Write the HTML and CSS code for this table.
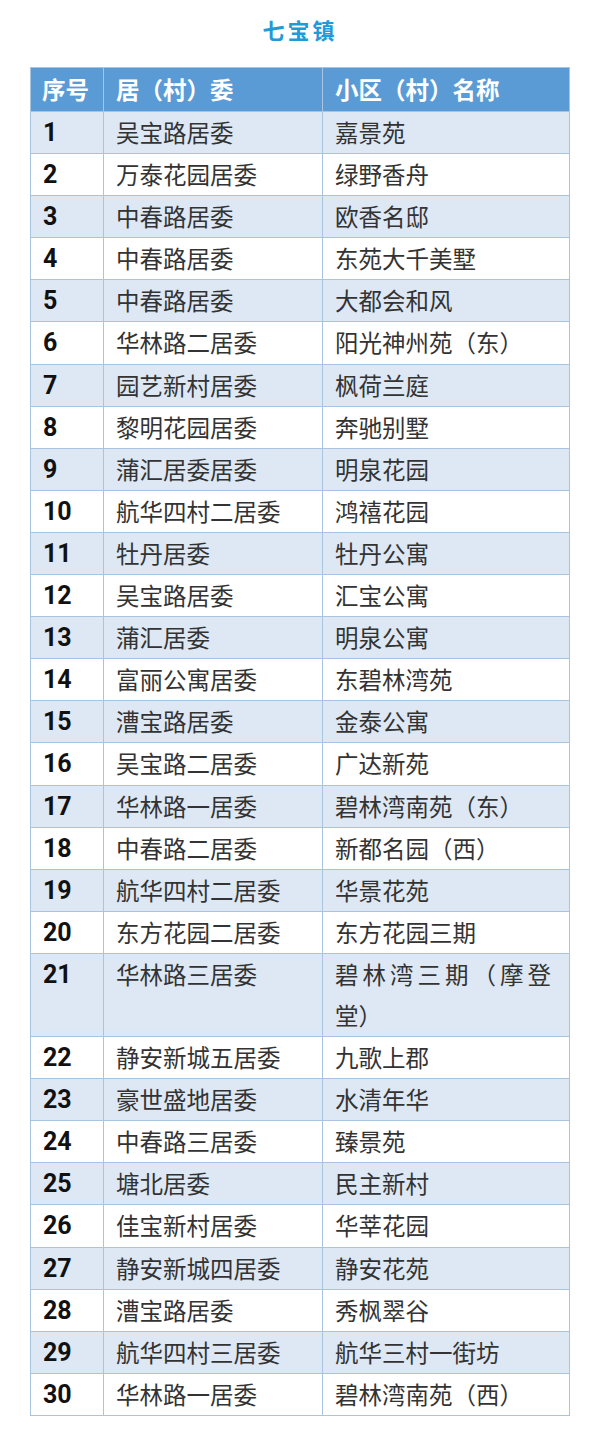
FILE: index.html
```html
<!DOCTYPE html>
<html lang="zh-CN">
<head>
<meta charset="utf-8">
<title>七宝镇</title>
<link rel="stylesheet" href="styles.css">
</head>
<body>
<h1 class="title">七宝镇</h1>
<table class="list">
  <colgroup><col class="c-no"><col class="c-comm"><col class="c-name"></colgroup>
  <thead>
    <tr><th>序号</th><th>居（村）委</th><th>小区（村）名称</th></tr>
  </thead>
  <tbody>
    <tr><td class="no">1</td><td>吴宝路居委</td><td>嘉景苑</td></tr>
    <tr><td class="no">2</td><td>万泰花园居委</td><td>绿野香舟</td></tr>
    <tr><td class="no">3</td><td>中春路居委</td><td>欧香名邸</td></tr>
    <tr><td class="no">4</td><td>中春路居委</td><td>东苑大千美墅</td></tr>
    <tr><td class="no">5</td><td>中春路居委</td><td>大都会和风</td></tr>
    <tr><td class="no">6</td><td>华林路二居委</td><td>阳光神州苑（东）</td></tr>
    <tr><td class="no">7</td><td>园艺新村居委</td><td>枫荷兰庭</td></tr>
    <tr><td class="no">8</td><td>黎明花园居委</td><td>奔驰别墅</td></tr>
    <tr><td class="no">9</td><td>蒲汇居委居委</td><td>明泉花园</td></tr>
    <tr><td class="no">10</td><td>航华四村二居委</td><td>鸿禧花园</td></tr>
    <tr><td class="no">11</td><td>牡丹居委</td><td>牡丹公寓</td></tr>
    <tr><td class="no">12</td><td>吴宝路居委</td><td>汇宝公寓</td></tr>
    <tr><td class="no">13</td><td>蒲汇居委</td><td>明泉公寓</td></tr>
    <tr><td class="no">14</td><td>富丽公寓居委</td><td>东碧林湾苑</td></tr>
    <tr><td class="no">15</td><td>漕宝路居委</td><td>金泰公寓</td></tr>
    <tr><td class="no">16</td><td>吴宝路二居委</td><td>广达新苑</td></tr>
    <tr><td class="no">17</td><td>华林路一居委</td><td>碧林湾南苑（东）</td></tr>
    <tr><td class="no">18</td><td>中春路二居委</td><td>新都名园（西）</td></tr>
    <tr><td class="no">19</td><td>航华四村二居委</td><td>华景花苑</td></tr>
    <tr><td class="no">20</td><td>东方花园二居委</td><td>东方花园三期</td></tr>
    <tr><td class="no">21</td><td>华林路三居委</td><td class="wrap">碧林湾三期（摩登堂）</td></tr>
    <tr><td class="no">22</td><td>静安新城五居委</td><td>九歌上郡</td></tr>
    <tr><td class="no">23</td><td>豪世盛地居委</td><td>水清年华</td></tr>
    <tr><td class="no">24</td><td>中春路三居委</td><td>臻景苑</td></tr>
    <tr><td class="no">25</td><td>塘北居委</td><td>民主新村</td></tr>
    <tr><td class="no">26</td><td>佳宝新村居委</td><td>华莘花园</td></tr>
    <tr><td class="no">27</td><td>静安新城四居委</td><td>静安花苑</td></tr>
    <tr><td class="no">28</td><td>漕宝路居委</td><td>秀枫翠谷</td></tr>
    <tr><td class="no">29</td><td>航华四村三居委</td><td>航华三村一街坊</td></tr>
    <tr><td class="no">30</td><td>华林路一居委</td><td>碧林湾南苑（西）</td></tr>
  </tbody>
</table>
</body>
</html>
```

FILE: styles.css
```css
html, body {
  margin: 0;
  padding: 0;
  background: #ffffff;
}

body {
  font-family: "Noto Sans CJK SC", "Noto Sans", sans-serif;
  color: #333333;
}

.title {
  margin: 0 0 23px 0;
  padding-top: 14px;
  font-size: 22px;
  line-height: 30px;
  font-weight: 700;
  letter-spacing: 3px;
  text-align: center;
  color: #1f9bd7;
}

.list {
  width: 539px;
  margin-left: 30px;
  border-collapse: collapse;
  table-layout: fixed;
  border: 1px solid #a9c4e0;
}

.c-no { width: 73px; }
.c-comm { width: 219px; }
.c-name { width: 247px; }

.list th,
.list td {
  border: 1px solid #a9c4e0;
  padding: 0 12px;
  vertical-align: top;
  text-align: left;
  font-size: 23.5px;
}

.list th {
  background: #5b9bd5;
  color: #ffffff;
  font-weight: 700;
  line-height: 43px;
  padding-left: 12px;
  white-space: nowrap;
}

.list th:first-child {
  padding-left: 11px;
  padding-right: 0;
}

.list td {
  line-height: 41.1px;
  font-weight: 400;
  color: #333333;
}

.list tbody tr:nth-child(odd) td {
  background: #dde8f4;
}

.list tbody tr:nth-child(even) td {
  background: #ffffff;
}

.list td.no {
  font-family: Roboto, "Liberation Sans", sans-serif;
  font-weight: 700;
  color: #111111;
  font-size: 25px;
  padding-left: 12px;
  padding-top: 1px;
  line-height: 40.1px;
}

.list td.wrap {
  text-align: justify;
  text-align-last: left;
  padding-right: 18px;
}
```
